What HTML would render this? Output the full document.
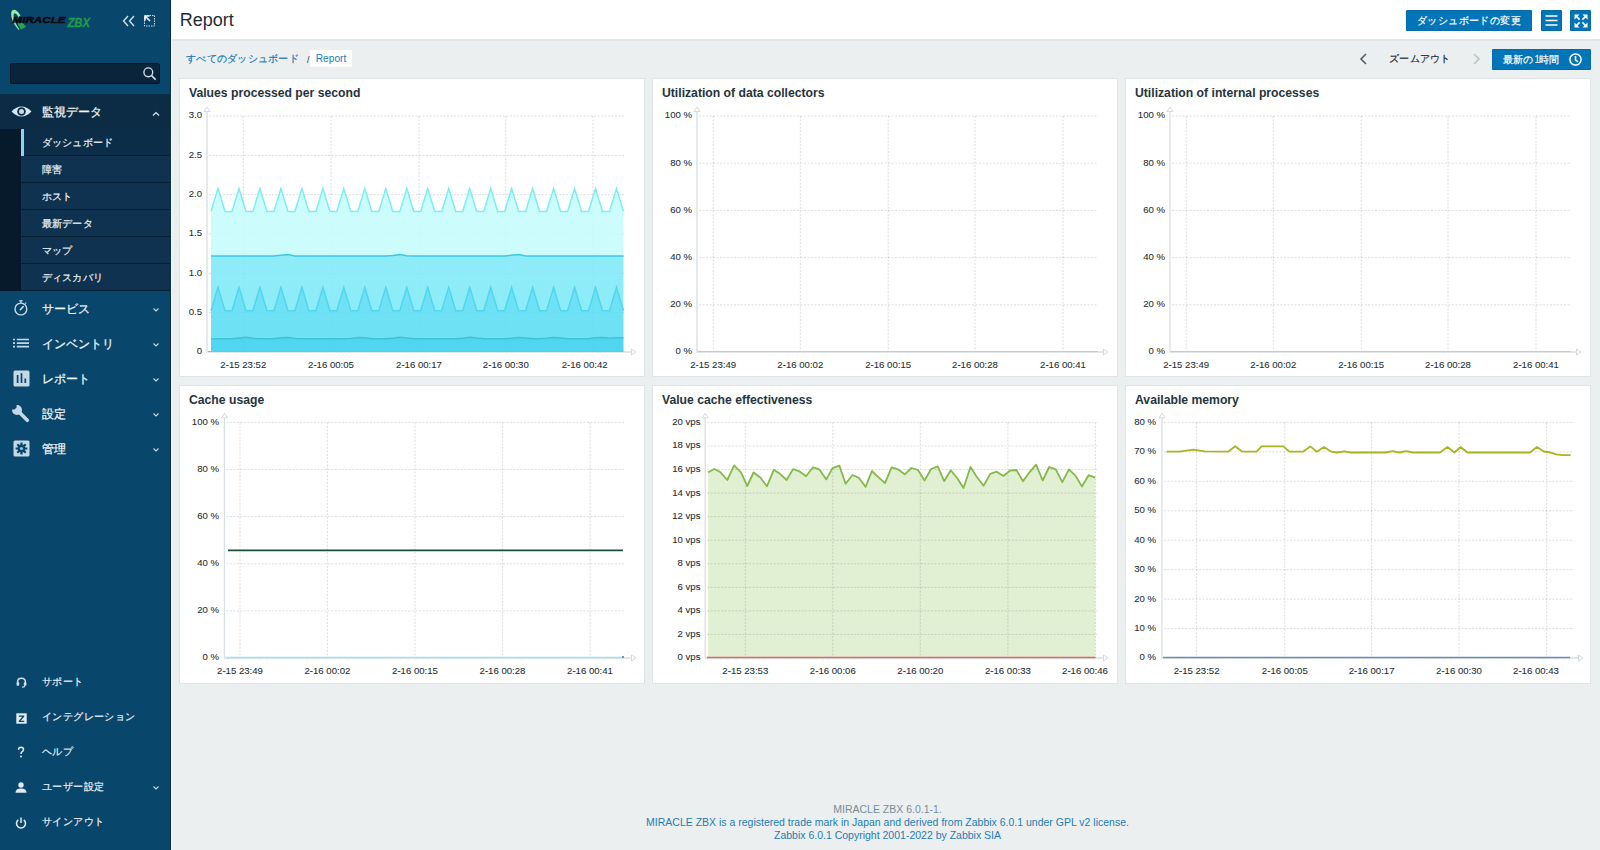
<!DOCTYPE html><html lang="ja"><head><meta charset="utf-8"><title>Report</title><style>
*{box-sizing:border-box}
html,body{margin:0;padding:0}
body{width:1600px;height:850px;overflow:hidden;background:#eceff0;font-family:"Liberation Sans",sans-serif;position:relative;color:#1f2c33}
.a{position:absolute;white-space:nowrap}
#sb{position:absolute;left:0;top:0;width:171px;height:850px;background:#09466c;border-right:1px solid #072f4a}
#wl{position:absolute;left:171px;top:0;width:1px;height:850px;background:#fff}
.mi{position:absolute;left:0;width:170px;height:35px;color:#f2f5f7;font-size:12px;line-height:35px;-webkit-text-stroke:0.25px #f2f5f7}
.mi .t{position:absolute;left:41.5px;top:0.7px}
.mi svg,.bi svg{position:absolute}
.sm{position:absolute;left:21px;width:149px;height:27px;background:#0e3250;color:#eef2f5;font-size:10px;letter-spacing:0.25px;line-height:26px;border-bottom:1px solid #081f31;-webkit-text-stroke:0.2px #eef2f5}
.sm .t{position:absolute;left:20.5px;top:0.8px}
.bi{position:absolute;left:0;width:170px;height:35px;color:#e9eef2;font-size:10px;letter-spacing:0.4px;line-height:35px;-webkit-text-stroke:0.2px #e9eef2}
.bi .t{position:absolute;left:42px;top:0}
.chev{position:absolute;left:152px}
#hdr{position:absolute;left:172px;top:0;width:1428px;height:39px;background:#fff}
.btn{position:absolute;background:#0275b8;border-radius:1.5px;color:#fff;box-shadow:inset 0 0 0 1px #056aa6}
.wg{position:absolute;background:#fff;border:1px solid #dfe4e7;width:466px;height:299px}
.wg .h{position:absolute;left:9px;top:6px;font-size:12.2px;font-weight:bold;color:#24343e;line-height:16px}
#ft{position:absolute;left:173.5px;width:1428px;text-align:center;font-size:10.5px;line-height:13.4px;top:802.5px}
</style></head><body>
<div id="sb">
<svg class="a" style="left:8px;top:7px" width="86" height="26" viewBox="0 0 86 26">
<path d="M3.5 4.5 Q4.5 2 7.5 3 Q10 4 12.5 8.5 L10.5 10 Q8.5 6.5 6.8 6.3 Q5.2 6.3 5.6 9 Q6.5 16 11.5 22.5 L10.8 23 Q4.5 16.5 3.3 9 Q3 6 3.5 4.5Z" fill="#9ee9a6"/>
<path d="M9.5 16.5 L14.5 15.5 L18 20 L13 22.5 Z" fill="#27a552"/>
<text x="4.5" y="16" font-family="Liberation Sans" font-weight="bold" font-style="italic" font-size="8.2" fill="#05090c" stroke="#05090c" stroke-width="0.45" textLength="53" lengthAdjust="spacingAndGlyphs">MIRACLE</text>
<text x="59.5" y="20" font-family="Liberation Sans" font-weight="bold" font-style="italic" font-size="13" fill="#1e9c46" stroke="#1e9c46" stroke-width="0.3" textLength="22.5" lengthAdjust="spacingAndGlyphs">ZBX</text>
</svg>
<svg class="a" style="left:120px;top:12px" width="40" height="18" viewBox="0 0 40 18">
<path d="M8 4 L3.5 9 L8 14 M14 4 L9.5 9 L14 14" fill="none" stroke="#d9e6ee" stroke-width="1.3"/>
<path d="M24.5 3.5 h10 v10.5 h-10 z" fill="none" stroke="#c9dbe6" stroke-width="1" stroke-dasharray="1.5 1"/>
<path d="M25 4 L30 9 M25 4 h4.5 M25 4 v4.5" fill="none" stroke="#eaf2f7" stroke-width="1.7"/>
</svg>
<div class="a" style="left:10px;top:63px;width:150px;height:21px;background:#0a253b;border:1px solid #06182a;border-radius:2px"></div>
<svg class="a" style="left:142px;top:66px" width="16" height="16" viewBox="0 0 16 16"><circle cx="6.3" cy="6.3" r="4.4" fill="none" stroke="#cfdfe9" stroke-width="1.35"/><path d="M9.5 9.5 L13.6 13.6" stroke="#cfdfe9" stroke-width="1.7"/></svg>
<div class="mi" style="top:94px;background:#0c2c45"><svg style="left:10.5px;top:10px" width="21" height="15" viewBox="0 0 21 15"><path d="M0.5 7.5 Q10.5 -2.5 20.5 7.5 Q10.5 17.5 0.5 7.5Z" fill="#dbe7f0"/><circle cx="10.5" cy="7.5" r="4.3" fill="#0c2c45"/><circle cx="10.5" cy="7.5" r="2.5" fill="#c9dceb"/></svg><span class="t">監視データ</span><svg class="chev" style="top:16.5px" width="8" height="6" viewBox="0 0 8 6"><path d="M1 4.5 L4 1.5 L7 4.5" fill="none" stroke="#dfe8ee" stroke-width="1.2"/></svg></div>
<div class="a" style="left:0;top:129px;width:21px;height:162px;background:#061a2b"></div>
<div class="sm" style="top:129px;background:#0c2d48"><span class="t">ダッシュボード</span></div>
<div class="sm" style="top:156px;background:#0e3250"><span class="t">障害</span></div>
<div class="sm" style="top:183px;background:#0e3250"><span class="t">ホスト</span></div>
<div class="sm" style="top:210px;background:#0e3250"><span class="t">最新データ</span></div>
<div class="sm" style="top:237px;background:#0e3250"><span class="t">マップ</span></div>
<div class="sm" style="top:264px;background:#0e3250"><span class="t">ディスカバリ</span></div>
<div class="a" style="left:21px;top:129px;width:3px;height:27px;background:#8fd0f5"></div>
<div class="mi" style="top:291px"><svg style="left:12px;top:8px" width="18" height="18" viewBox="0 0 18 18"><circle cx="8.9" cy="10" r="5.9" fill="none" stroke="#c5d8e5" stroke-width="1.4"/><path d="M7.2 1.8 h3.4" stroke="#c5d8e5" stroke-width="1.4"/><path d="M8.9 2.2 v1.8" stroke="#c5d8e5" stroke-width="1.3"/><path d="M13.2 4.6 l1 -1" stroke="#c5d8e5" stroke-width="1.2"/><path d="M8.4 10.6 L11.3 7.5" stroke="#c5d8e5" stroke-width="1.6" stroke-linecap="round"/></svg><span class="t">サービス</span><svg class="chev" style="top:16.3px" width="8" height="6" viewBox="0 0 8 6"><path d="M1.5 1.5 L4 4 L6.5 1.5" fill="none" stroke="#c9d9e4" stroke-width="1.1"/></svg></div>
<div class="mi" style="top:326px"><svg style="left:12px;top:12px" width="18" height="12" viewBox="0 0 18 12"><path d="M1 1.5h2M1 5.1h2M1 8.7h2M4.8 1.5H17M4.8 5.1H17M4.8 8.7H17" stroke="#c5d8e5" stroke-width="1.7"/></svg><span class="t">インベントリ</span><svg class="chev" style="top:16.3px" width="8" height="6" viewBox="0 0 8 6"><path d="M1.5 1.5 L4 4 L6.5 1.5" fill="none" stroke="#c9d9e4" stroke-width="1.1"/></svg></div>
<div class="mi" style="top:361px"><svg style="left:12.5px;top:8.5px" width="17" height="17" viewBox="0 0 17 17"><rect x="0.5" y="0.5" width="16" height="16" rx="1.5" fill="#c5d8e5"/><path d="M4.6 5v8M8.5 3.3v9.7M12.3 8.5v4.5" stroke="#09466c" stroke-width="1.7"/></svg><span class="t">レポート</span><svg class="chev" style="top:16.3px" width="8" height="6" viewBox="0 0 8 6"><path d="M1.5 1.5 L4 4 L6.5 1.5" fill="none" stroke="#c9d9e4" stroke-width="1.1"/></svg></div>
<div class="mi" style="top:396px"><svg style="left:11px;top:8px" width="19" height="19" viewBox="0 0 19 19"><circle cx="6" cy="6" r="5" fill="#c5d8e5"/><path d="M0.5 0.5 L5.5 0.5 L5.5 3.5 L3.5 5.5 L0.5 5.5Z" fill="#09466c"/><path d="M6.5 6.5 L16.3 16.3" stroke="#c5d8e5" stroke-width="3.6" stroke-linecap="round"/></svg><span class="t">設定</span><svg class="chev" style="top:16.3px" width="8" height="6" viewBox="0 0 8 6"><path d="M1.5 1.5 L4 4 L6.5 1.5" fill="none" stroke="#c9d9e4" stroke-width="1.1"/></svg></div>
<div class="mi" style="top:431px"><svg style="left:12.5px;top:8.5px" width="17" height="17" viewBox="0 0 17 17"><rect x="0.5" y="0.5" width="16" height="16" rx="1.5" fill="#c5d8e5"/><circle cx="8.5" cy="8.5" r="3.9" fill="#09466c"/><path d="M8.5 2.6v2.4M8.5 12v2.4M2.6 8.5h2.4M12 8.5h2.4M4.3 4.3l1.7 1.7M11 11l1.7 1.7M4.3 12.7l1.7-1.7M11 6l1.7-1.7" stroke="#09466c" stroke-width="2.2"/><circle cx="8.5" cy="8.5" r="1.6" fill="#8fc3e6"/></svg><span class="t">管理</span><svg class="chev" style="top:16.3px" width="8" height="6" viewBox="0 0 8 6"><path d="M1.5 1.5 L4 4 L6.5 1.5" fill="none" stroke="#c9d9e4" stroke-width="1.1"/></svg></div>
<div class="bi" style="top:664px"><svg style="left:16px;top:13px" width="11" height="11" viewBox="0 0 11 11"><path d="M1.6 6.5 V5 Q1.6 1.2 5.5 1.2 Q9.4 1.2 9.4 5 V6.5" fill="none" stroke="#d3e1ea" stroke-width="1.5"/><rect x="0.6" y="5.2" width="2.6" height="3.6" rx="0.8" fill="#d3e1ea"/><rect x="7.8" y="5.2" width="2.6" height="3.6" rx="0.8" fill="#d3e1ea"/><path d="M9 8.5 Q8.5 10.3 6 10.3" fill="none" stroke="#d3e1ea" stroke-width="1.1"/></svg><span class="t">サポート</span></div>
<div class="bi" style="top:699px"><svg style="left:16px;top:13.5px" width="11" height="11" viewBox="0 0 11 11"><rect x="0.3" y="0.3" width="10.4" height="10.4" fill="#e3ecf2"/><path d="M2.8 2.5h5.4v1.3l-3.6 4h3.6v1.3h-5.4v-1.3l3.6-4h-3.6z" fill="#09466c"/></svg><span class="t">インテグレーション</span></div>
<div class="bi" style="top:734px"><svg style="left:17px;top:11.5px" width="8" height="13" viewBox="0 0 8 13"><path d="M1.5 3.8 Q1.5 1.2 4 1.2 Q6.5 1.2 6.5 3.6 Q6.5 5 4.9 5.9 Q4 6.5 4 7.9" fill="none" stroke="#e0eaf1" stroke-width="1.5"/><circle cx="4" cy="10.6" r="1" fill="#e0eaf1"/></svg><span class="t">ヘルプ</span></div>
<div class="bi" style="top:769px"><svg style="left:15px;top:13px" width="12" height="11" viewBox="0 0 12 11"><circle cx="6" cy="3" r="2.7" fill="#e0eaf1"/><path d="M0.5 10.8 Q0.5 6.5 6 6.5 Q11.5 6.5 11.5 10.8Z" fill="#e0eaf1"/></svg><span class="t">ユーザー設定</span><svg class="chev" style="top:16.3px" width="8" height="6" viewBox="0 0 8 6"><path d="M1.5 1.5 L4 4 L6.5 1.5" fill="none" stroke="#c9d9e4" stroke-width="1.1"/></svg></div>
<div class="bi" style="top:804px"><svg style="left:15px;top:13px" width="12" height="12" viewBox="0 0 12 12"><path d="M3.3 2.8 A4.5 4.5 0 1 0 8.7 2.8" fill="none" stroke="#e0eaf1" stroke-width="1.5"/><path d="M6 0.5 V6" stroke="#e0eaf1" stroke-width="1.5"/></svg><span class="t">サインアウト</span></div>
</div><div id="wl"></div>
<div id="hdr"></div>
<div class="a" style="left:172px;top:39px;width:1428px;height:2px;background:#e2e5e6"></div>
<div class="a" style="left:179.7px;top:8px;font-size:18px;line-height:24px;color:#1f2c33">Report</div>
<div class="btn" style="left:1406px;top:10px;width:126px;height:21px;font-size:10px;letter-spacing:0.4px;line-height:21px;text-align:center;-webkit-text-stroke:0.2px #fff">ダッシュボードの変更</div>
<div class="btn" style="left:1541px;top:10px;width:21px;height:21px"><svg class="a" style="left:4px;top:4px" width="13" height="13" viewBox="0 0 13 13"><path d="M0.5 2h12M0.5 6.5h12M0.5 11h12" stroke="#fff" stroke-width="1.7"/></svg></div>
<div class="btn" style="left:1570px;top:10px;width:21px;height:21px"><svg class="a" style="left:3.5px;top:3.5px" width="14" height="14" viewBox="0 0 14 14"><path d="M0.5 0.5h5l-5 5z M13.5 0.5h-5l5 5z M0.5 13.5h5l-5-5z M13.5 13.5h-5l5-5z" fill="#fff"/><path d="M2 2L5.6 5.6M12 2L8.4 5.6M2 12L5.6 8.4M12 12L8.4 8.4" stroke="#fff" stroke-width="1.7"/></svg></div>
<div class="a" style="left:186px;top:51px;font-size:10px;letter-spacing:0.27px;line-height:15px;color:#1a7ab5;-webkit-text-stroke:0.2px #1a7ab5">すべてのダッシュボード</div>
<div class="a" style="left:307px;top:54px;font-size:8.5px;line-height:12px;color:#1f2c33">/</div>
<div class="a" style="left:310px;top:50px;width:42px;height:17px;background:#fff;font-size:10.2px;line-height:17px;color:#1a7ab5;text-align:center">Report</div>
<svg class="a" style="left:1357.5px;top:52px" width="12" height="14" viewBox="0 0 12 14"><path d="M8 2 L3 7 L8 12" fill="none" stroke="#535f66" stroke-width="1.6"/></svg>
<div class="a" style="left:1389px;top:52px;font-size:10px;letter-spacing:0.3px;line-height:14px;color:#1f2c33;-webkit-text-stroke:0.2px #1f2c33">ズームアウト</div>
<svg class="a" style="left:1470px;top:52px" width="12" height="14" viewBox="0 0 12 14"><path d="M4 2 L9 7 L4 12" fill="none" stroke="#b9c3c8" stroke-width="1.6"/></svg>
<div class="btn" style="left:1492px;top:49px;width:99px;height:21px"><span class="a" style="left:11px;top:0;font-size:10px;line-height:21px;-webkit-text-stroke:0.2px #fff">最新の</span><span class="a" style="left:42.3px;top:0;font-size:10.4px;line-height:21px;font-family:'Liberation Sans'">1</span><span class="a" style="left:47px;top:0;font-size:10px;line-height:21px;-webkit-text-stroke:0.2px #fff">時間</span><svg class="a" style="left:76px;top:3px" width="15" height="15" viewBox="0 0 15 15"><circle cx="7.5" cy="7.5" r="5.6" fill="none" stroke="#fff" stroke-width="1.5"/><path d="M7.5 4 V7.8 L10 9.8" fill="none" stroke="#fff" stroke-width="1.5"/></svg></div>
<div class="wg" style="left:179px;top:78px"><div class="h">Values processed per second</div></div>
<div class="wg" style="left:652px;top:78px"><div class="h">Utilization of data collectors</div></div>
<div class="wg" style="left:1125px;top:78px"><div class="h">Utilization of internal processes</div></div>
<div class="wg" style="left:179px;top:385px"><div class="h">Cache usage</div></div>
<div class="wg" style="left:652px;top:385px"><div class="h">Value cache effectiveness</div></div>
<div class="wg" style="left:1125px;top:385px"><div class="h">Available memory</div></div>
<svg class="a" style="left:0;top:0" width="1600" height="850" viewBox="0 0 1600 850" font-family="Liberation Sans" font-size="9.6" fill="#1f2c33">
<path d="M209 116.0H624" stroke="#1f2c33" stroke-opacity="0.16" stroke-width="1" stroke-dasharray="2 1.5"/>
<path d="M209 155.33333333333334H624" stroke="#1f2c33" stroke-opacity="0.16" stroke-width="1" stroke-dasharray="2 1.5"/>
<path d="M209 194.66666666666669H624" stroke="#1f2c33" stroke-opacity="0.16" stroke-width="1" stroke-dasharray="2 1.5"/>
<path d="M209 234.0H624" stroke="#1f2c33" stroke-opacity="0.16" stroke-width="1" stroke-dasharray="2 1.5"/>
<path d="M209 273.33333333333337H624" stroke="#1f2c33" stroke-opacity="0.16" stroke-width="1" stroke-dasharray="2 1.5"/>
<path d="M209 312.66666666666663H624" stroke="#1f2c33" stroke-opacity="0.16" stroke-width="1" stroke-dasharray="2 1.5"/>
<path d="M243.3 116V352" stroke="#1f2c33" stroke-opacity="0.16" stroke-width="1" stroke-dasharray="2 1.5"/>
<path d="M331 116V352" stroke="#1f2c33" stroke-opacity="0.16" stroke-width="1" stroke-dasharray="2 1.5"/>
<path d="M419 116V352" stroke="#1f2c33" stroke-opacity="0.16" stroke-width="1" stroke-dasharray="2 1.5"/>
<path d="M505.8 116V352" stroke="#1f2c33" stroke-opacity="0.16" stroke-width="1" stroke-dasharray="2 1.5"/>
<path d="M593 116V352" stroke="#1f2c33" stroke-opacity="0.16" stroke-width="1" stroke-dasharray="2 1.5"/>
<polygon points="211.0,211.4 218.0,188.5 225.0,211.4 232.0,211.4 239.0,188.5 246.0,211.4 252.9,211.4 259.9,188.5 266.9,211.4 273.9,211.4 280.9,188.5 287.9,211.4 294.9,211.4 301.9,188.5 308.9,211.4 315.9,211.4 322.9,188.5 329.9,211.4 336.8,211.4 343.8,188.5 350.8,211.4 357.8,211.4 364.8,188.5 371.8,211.4 378.8,211.4 385.8,188.5 392.8,211.4 399.8,211.4 406.8,188.5 413.8,211.4 420.7,211.4 427.7,188.5 434.7,211.4 441.7,211.4 448.7,188.5 455.7,211.4 462.7,211.4 469.7,188.5 476.7,211.4 483.7,211.4 490.7,188.5 497.7,211.4 504.6,211.4 511.6,188.5 518.6,211.4 525.6,211.4 532.6,188.5 539.6,211.4 546.6,211.4 553.6,188.5 560.6,211.4 567.6,211.4 574.6,188.5 581.6,211.4 588.5,211.4 595.5,188.5 602.5,211.4 609.5,211.4 616.5,188.5 623.5,211.4 623.5,256.0 616.5,256.0 609.5,256.0 602.5,256.0 595.5,256.0 588.5,256.0 581.6,256.0 574.6,256.0 567.6,256.0 560.6,256.0 553.6,256.0 546.6,256.0 539.6,256.0 532.6,256.0 525.6,255.9 518.6,254.5 511.6,255.3 504.6,256.0 497.7,256.0 490.7,256.0 483.7,256.0 476.7,256.0 469.7,256.0 462.7,256.0 455.7,256.0 448.7,256.0 441.7,256.0 434.7,256.0 427.7,256.0 420.7,256.0 413.8,256.0 406.8,255.8 399.8,254.4 392.8,255.4 385.8,256.0 378.8,256.0 371.8,256.0 364.8,256.0 357.8,256.0 350.8,256.0 343.8,256.0 336.8,256.0 329.9,256.0 322.9,256.0 315.9,256.0 308.9,256.0 301.9,256.0 294.9,256.0 287.9,254.6 280.9,255.2 273.9,256.0 266.9,256.0 259.9,256.0 252.9,256.0 246.0,256.0 239.0,256.0 232.0,256.0 225.0,256.0 218.0,256.0 211.0,256.0" fill="#c4fbfd" fill-opacity="0.85"/>
<polygon points="211.0,256.0 218.0,256.0 225.0,256.0 232.0,256.0 239.0,256.0 246.0,256.0 252.9,256.0 259.9,256.0 266.9,256.0 273.9,256.0 280.9,255.2 287.9,254.6 294.9,256.0 301.9,256.0 308.9,256.0 315.9,256.0 322.9,256.0 329.9,256.0 336.8,256.0 343.8,256.0 350.8,256.0 357.8,256.0 364.8,256.0 371.8,256.0 378.8,256.0 385.8,256.0 392.8,255.4 399.8,254.4 406.8,255.8 413.8,256.0 420.7,256.0 427.7,256.0 434.7,256.0 441.7,256.0 448.7,256.0 455.7,256.0 462.7,256.0 469.7,256.0 476.7,256.0 483.7,256.0 490.7,256.0 497.7,256.0 504.6,256.0 511.6,255.3 518.6,254.5 525.6,255.9 532.6,256.0 539.6,256.0 546.6,256.0 553.6,256.0 560.6,256.0 567.6,256.0 574.6,256.0 581.6,256.0 588.5,256.0 595.5,256.0 602.5,256.0 609.5,256.0 616.5,256.0 623.5,256.0 623.5,310.7 616.5,287.4 609.5,310.7 602.5,310.7 595.5,287.4 588.5,310.7 581.6,310.7 574.6,287.4 567.6,310.7 560.6,310.7 553.6,287.4 546.6,310.7 539.6,310.7 532.6,287.4 525.6,310.7 518.6,310.7 511.6,287.4 504.6,310.7 497.7,310.7 490.7,287.4 483.7,310.7 476.7,310.7 469.7,287.4 462.7,310.7 455.7,310.7 448.7,287.4 441.7,310.7 434.7,310.7 427.7,287.4 420.7,310.7 413.8,310.7 406.8,287.4 399.8,310.7 392.8,310.7 385.8,287.4 378.8,310.7 371.8,310.7 364.8,287.4 357.8,310.7 350.8,310.7 343.8,287.4 336.8,310.7 329.9,310.7 322.9,287.4 315.9,310.7 308.9,310.7 301.9,287.4 294.9,310.7 287.9,310.7 280.9,287.4 273.9,310.7 266.9,310.7 259.9,287.4 252.9,310.7 246.0,310.7 239.0,287.4 232.0,310.7 225.0,310.7 218.0,287.4 211.0,310.7" fill="#7ae7f7" fill-opacity="0.85"/>
<polygon points="211.0,310.7 218.0,287.4 225.0,310.7 232.0,310.7 239.0,287.4 246.0,310.7 252.9,310.7 259.9,287.4 266.9,310.7 273.9,310.7 280.9,287.4 287.9,310.7 294.9,310.7 301.9,287.4 308.9,310.7 315.9,310.7 322.9,287.4 329.9,310.7 336.8,310.7 343.8,287.4 350.8,310.7 357.8,310.7 364.8,287.4 371.8,310.7 378.8,310.7 385.8,287.4 392.8,310.7 399.8,310.7 406.8,287.4 413.8,310.7 420.7,310.7 427.7,287.4 434.7,310.7 441.7,310.7 448.7,287.4 455.7,310.7 462.7,310.7 469.7,287.4 476.7,310.7 483.7,310.7 490.7,287.4 497.7,310.7 504.6,310.7 511.6,287.4 518.6,310.7 525.6,310.7 532.6,287.4 539.6,310.7 546.6,310.7 553.6,287.4 560.6,310.7 567.6,310.7 574.6,287.4 581.6,310.7 588.5,310.7 595.5,287.4 602.5,310.7 609.5,310.7 616.5,287.4 623.5,310.7 623.5,337.7 616.5,337.7 609.5,338.3 602.5,337.5 595.5,337.8 588.5,338.7 581.6,338.8 574.6,338.8 567.6,338.8 560.6,337.9 553.6,337.4 546.6,338.3 539.6,338.8 532.6,338.8 525.6,337.9 518.6,337.4 511.6,338.3 504.6,338.8 497.7,338.8 490.7,338.8 483.7,338.8 476.7,338.1 469.7,337.2 462.7,338.2 455.7,338.8 448.7,338.8 441.7,338.8 434.7,338.8 427.7,338.8 420.7,338.8 413.8,338.8 406.8,338.1 399.8,337.2 392.8,338.2 385.8,338.8 378.8,338.8 371.8,338.8 364.8,337.8 357.8,337.5 350.8,338.4 343.8,338.8 336.8,338.8 329.9,338.8 322.9,338.8 315.9,338.8 308.9,338.8 301.9,338.8 294.9,338.5 287.9,337.6 280.9,337.7 273.9,338.7 266.9,338.8 259.9,338.8 252.9,338.3 246.0,337.3 239.0,338.0 232.0,338.8 225.0,338.8 218.0,338.8 211.0,338.8" fill="#56dcf3" fill-opacity="0.85"/>
<polygon points="211.0,338.8 218.0,338.8 225.0,338.8 232.0,338.8 239.0,338.0 246.0,337.3 252.9,338.3 259.9,338.8 266.9,338.8 273.9,338.7 280.9,337.7 287.9,337.6 294.9,338.5 301.9,338.8 308.9,338.8 315.9,338.8 322.9,338.8 329.9,338.8 336.8,338.8 343.8,338.8 350.8,338.4 357.8,337.5 364.8,337.8 371.8,338.8 378.8,338.8 385.8,338.8 392.8,338.2 399.8,337.2 406.8,338.1 413.8,338.8 420.7,338.8 427.7,338.8 434.7,338.8 441.7,338.8 448.7,338.8 455.7,338.8 462.7,338.2 469.7,337.2 476.7,338.1 483.7,338.8 490.7,338.8 497.7,338.8 504.6,338.8 511.6,338.3 518.6,337.4 525.6,337.9 532.6,338.8 539.6,338.8 546.6,338.3 553.6,337.4 560.6,337.9 567.6,338.8 574.6,338.8 581.6,338.8 588.5,338.7 595.5,337.8 602.5,337.5 609.5,338.3 616.5,337.7 623.5,337.7 623.5,352.0 211.0,352.0" fill="#31cfef" fill-opacity="0.85"/>
<path d="M207 111V352H632" fill="none" stroke="#d9dee2" stroke-width="1.3"/>
<path d="M207 107 l-3 4.5 h6 z" fill="#fff" stroke="#d3d9dd" stroke-width="1"/>
<path d="M636 352 l-4.5 -3 v6 z" fill="#fff" stroke="#d3d9dd" stroke-width="1"/>
<polyline points="211.0,211.4 218.0,188.5 225.0,211.4 232.0,211.4 239.0,188.5 246.0,211.4 252.9,211.4 259.9,188.5 266.9,211.4 273.9,211.4 280.9,188.5 287.9,211.4 294.9,211.4 301.9,188.5 308.9,211.4 315.9,211.4 322.9,188.5 329.9,211.4 336.8,211.4 343.8,188.5 350.8,211.4 357.8,211.4 364.8,188.5 371.8,211.4 378.8,211.4 385.8,188.5 392.8,211.4 399.8,211.4 406.8,188.5 413.8,211.4 420.7,211.4 427.7,188.5 434.7,211.4 441.7,211.4 448.7,188.5 455.7,211.4 462.7,211.4 469.7,188.5 476.7,211.4 483.7,211.4 490.7,188.5 497.7,211.4 504.6,211.4 511.6,188.5 518.6,211.4 525.6,211.4 532.6,188.5 539.6,211.4 546.6,211.4 553.6,188.5 560.6,211.4 567.6,211.4 574.6,188.5 581.6,211.4 588.5,211.4 595.5,188.5 602.5,211.4 609.5,211.4 616.5,188.5 623.5,211.4" fill="none" stroke="#7beef4" stroke-width="1.5"/>
<polyline points="211.0,256.0 218.0,256.0 225.0,256.0 232.0,256.0 239.0,256.0 246.0,256.0 252.9,256.0 259.9,256.0 266.9,256.0 273.9,256.0 280.9,255.2 287.9,254.6 294.9,256.0 301.9,256.0 308.9,256.0 315.9,256.0 322.9,256.0 329.9,256.0 336.8,256.0 343.8,256.0 350.8,256.0 357.8,256.0 364.8,256.0 371.8,256.0 378.8,256.0 385.8,256.0 392.8,255.4 399.8,254.4 406.8,255.8 413.8,256.0 420.7,256.0 427.7,256.0 434.7,256.0 441.7,256.0 448.7,256.0 455.7,256.0 462.7,256.0 469.7,256.0 476.7,256.0 483.7,256.0 490.7,256.0 497.7,256.0 504.6,256.0 511.6,255.3 518.6,254.5 525.6,255.9 532.6,256.0 539.6,256.0 546.6,256.0 553.6,256.0 560.6,256.0 567.6,256.0 574.6,256.0 581.6,256.0 588.5,256.0 595.5,256.0 602.5,256.0 609.5,256.0 616.5,256.0 623.5,256.0" fill="none" stroke="#3ec7e3" stroke-width="1.5"/>
<polyline points="211.0,310.7 218.0,287.4 225.0,310.7 232.0,310.7 239.0,287.4 246.0,310.7 252.9,310.7 259.9,287.4 266.9,310.7 273.9,310.7 280.9,287.4 287.9,310.7 294.9,310.7 301.9,287.4 308.9,310.7 315.9,310.7 322.9,287.4 329.9,310.7 336.8,310.7 343.8,287.4 350.8,310.7 357.8,310.7 364.8,287.4 371.8,310.7 378.8,310.7 385.8,287.4 392.8,310.7 399.8,310.7 406.8,287.4 413.8,310.7 420.7,310.7 427.7,287.4 434.7,310.7 441.7,310.7 448.7,287.4 455.7,310.7 462.7,310.7 469.7,287.4 476.7,310.7 483.7,310.7 490.7,287.4 497.7,310.7 504.6,310.7 511.6,287.4 518.6,310.7 525.6,310.7 532.6,287.4 539.6,310.7 546.6,310.7 553.6,287.4 560.6,310.7 567.6,310.7 574.6,287.4 581.6,310.7 588.5,310.7 595.5,287.4 602.5,310.7 609.5,310.7 616.5,287.4 623.5,310.7" fill="none" stroke="#4fd7ef" stroke-width="1.5"/>
<polyline points="211.0,338.8 218.0,338.8 225.0,338.8 232.0,338.8 239.0,338.0 246.0,337.3 252.9,338.3 259.9,338.8 266.9,338.8 273.9,338.7 280.9,337.7 287.9,337.6 294.9,338.5 301.9,338.8 308.9,338.8 315.9,338.8 322.9,338.8 329.9,338.8 336.8,338.8 343.8,338.8 350.8,338.4 357.8,337.5 364.8,337.8 371.8,338.8 378.8,338.8 385.8,338.8 392.8,338.2 399.8,337.2 406.8,338.1 413.8,338.8 420.7,338.8 427.7,338.8 434.7,338.8 441.7,338.8 448.7,338.8 455.7,338.8 462.7,338.2 469.7,337.2 476.7,338.1 483.7,338.8 490.7,338.8 497.7,338.8 504.6,338.8 511.6,338.3 518.6,337.4 525.6,337.9 532.6,338.8 539.6,338.8 546.6,338.3 553.6,337.4 560.6,337.9 567.6,338.8 574.6,338.8 581.6,338.8 588.5,338.7 595.5,337.8 602.5,337.5 609.5,338.3 616.5,337.7 623.5,337.7" fill="none" stroke="#3cc1de" stroke-width="1.5"/>
<path d="M208 351.5H623.5" stroke="#42d6f0" stroke-width="1.2"/>
<text x="202" y="118.4" text-anchor="end" fill="#1f2c33" stroke="#1f2c33" stroke-width="0.08">3.0</text>
<text x="202" y="157.7" text-anchor="end" fill="#1f2c33" stroke="#1f2c33" stroke-width="0.08">2.5</text>
<text x="202" y="197.1" text-anchor="end" fill="#1f2c33" stroke="#1f2c33" stroke-width="0.08">2.0</text>
<text x="202" y="236.4" text-anchor="end" fill="#1f2c33" stroke="#1f2c33" stroke-width="0.08">1.5</text>
<text x="202" y="275.7" text-anchor="end" fill="#1f2c33" stroke="#1f2c33" stroke-width="0.08">1.0</text>
<text x="202" y="315.1" text-anchor="end" fill="#1f2c33" stroke="#1f2c33" stroke-width="0.08">0.5</text>
<text x="202" y="354.4" text-anchor="end" fill="#1f2c33" stroke="#1f2c33" stroke-width="0.08">0</text>
<text x="243.3" y="367.5" text-anchor="middle" fill="#1f2c33" stroke="#1f2c33" stroke-width="0.08">2-15 23:52</text>
<text x="331" y="367.5" text-anchor="middle" fill="#1f2c33" stroke="#1f2c33" stroke-width="0.08">2-16 00:05</text>
<text x="419" y="367.5" text-anchor="middle" fill="#1f2c33" stroke="#1f2c33" stroke-width="0.08">2-16 00:17</text>
<text x="505.8" y="367.5" text-anchor="middle" fill="#1f2c33" stroke="#1f2c33" stroke-width="0.08">2-16 00:30</text>
<text x="584.7" y="367.5" text-anchor="middle" fill="#1f2c33" stroke="#1f2c33" stroke-width="0.08">2-16 00:42</text>
<path d="M699 116.0H1097.7" stroke="#1f2c33" stroke-opacity="0.16" stroke-width="1" stroke-dasharray="2 1.5"/>
<path d="M699 163.2H1097.7" stroke="#1f2c33" stroke-opacity="0.16" stroke-width="1" stroke-dasharray="2 1.5"/>
<path d="M699 210.4H1097.7" stroke="#1f2c33" stroke-opacity="0.16" stroke-width="1" stroke-dasharray="2 1.5"/>
<path d="M699 257.6H1097.7" stroke="#1f2c33" stroke-opacity="0.16" stroke-width="1" stroke-dasharray="2 1.5"/>
<path d="M699 304.8H1097.7" stroke="#1f2c33" stroke-opacity="0.16" stroke-width="1" stroke-dasharray="2 1.5"/>
<path d="M713.2 116V352" stroke="#1f2c33" stroke-opacity="0.16" stroke-width="1" stroke-dasharray="2 1.5"/>
<path d="M800.3 116V352" stroke="#1f2c33" stroke-opacity="0.16" stroke-width="1" stroke-dasharray="2 1.5"/>
<path d="M888.2 116V352" stroke="#1f2c33" stroke-opacity="0.16" stroke-width="1" stroke-dasharray="2 1.5"/>
<path d="M975 116V352" stroke="#1f2c33" stroke-opacity="0.16" stroke-width="1" stroke-dasharray="2 1.5"/>
<path d="M1063 116V352" stroke="#1f2c33" stroke-opacity="0.16" stroke-width="1" stroke-dasharray="2 1.5"/>
<path d="M697 111V352H1104" fill="none" stroke="#d9dee2" stroke-width="1.3"/>
<path d="M697 107 l-3 4.5 h6 z" fill="#fff" stroke="#d3d9dd" stroke-width="1"/>
<path d="M1108 352 l-4.5 -3 v6 z" fill="#fff" stroke="#d3d9dd" stroke-width="1"/>
<path d="M698 351.5H1097.7" stroke="#f2b8b8" stroke-width="1.2"/>
<text x="692" y="118.4" text-anchor="end" fill="#1f2c33" stroke="#1f2c33" stroke-width="0.08">100 %</text>
<text x="692" y="165.6" text-anchor="end" fill="#1f2c33" stroke="#1f2c33" stroke-width="0.08">80 %</text>
<text x="692" y="212.8" text-anchor="end" fill="#1f2c33" stroke="#1f2c33" stroke-width="0.08">60 %</text>
<text x="692" y="260.0" text-anchor="end" fill="#1f2c33" stroke="#1f2c33" stroke-width="0.08">40 %</text>
<text x="692" y="307.2" text-anchor="end" fill="#1f2c33" stroke="#1f2c33" stroke-width="0.08">20 %</text>
<text x="692" y="354.4" text-anchor="end" fill="#1f2c33" stroke="#1f2c33" stroke-width="0.08">0 %</text>
<text x="713.2" y="367.5" text-anchor="middle" fill="#1f2c33" stroke="#1f2c33" stroke-width="0.08">2-15 23:49</text>
<text x="800.3" y="367.5" text-anchor="middle" fill="#1f2c33" stroke="#1f2c33" stroke-width="0.08">2-16 00:02</text>
<text x="888.2" y="367.5" text-anchor="middle" fill="#1f2c33" stroke="#1f2c33" stroke-width="0.08">2-16 00:15</text>
<text x="975" y="367.5" text-anchor="middle" fill="#1f2c33" stroke="#1f2c33" stroke-width="0.08">2-16 00:28</text>
<text x="1063" y="367.5" text-anchor="middle" fill="#1f2c33" stroke="#1f2c33" stroke-width="0.08">2-16 00:41</text>
<path d="M1172 116.0H1570.7" stroke="#1f2c33" stroke-opacity="0.16" stroke-width="1" stroke-dasharray="2 1.5"/>
<path d="M1172 163.2H1570.7" stroke="#1f2c33" stroke-opacity="0.16" stroke-width="1" stroke-dasharray="2 1.5"/>
<path d="M1172 210.4H1570.7" stroke="#1f2c33" stroke-opacity="0.16" stroke-width="1" stroke-dasharray="2 1.5"/>
<path d="M1172 257.6H1570.7" stroke="#1f2c33" stroke-opacity="0.16" stroke-width="1" stroke-dasharray="2 1.5"/>
<path d="M1172 304.8H1570.7" stroke="#1f2c33" stroke-opacity="0.16" stroke-width="1" stroke-dasharray="2 1.5"/>
<path d="M1186.2 116V352" stroke="#1f2c33" stroke-opacity="0.16" stroke-width="1" stroke-dasharray="2 1.5"/>
<path d="M1273.3 116V352" stroke="#1f2c33" stroke-opacity="0.16" stroke-width="1" stroke-dasharray="2 1.5"/>
<path d="M1361.2 116V352" stroke="#1f2c33" stroke-opacity="0.16" stroke-width="1" stroke-dasharray="2 1.5"/>
<path d="M1448 116V352" stroke="#1f2c33" stroke-opacity="0.16" stroke-width="1" stroke-dasharray="2 1.5"/>
<path d="M1536 116V352" stroke="#1f2c33" stroke-opacity="0.16" stroke-width="1" stroke-dasharray="2 1.5"/>
<path d="M1170 111V352H1577" fill="none" stroke="#d9dee2" stroke-width="1.3"/>
<path d="M1170 107 l-3 4.5 h6 z" fill="#fff" stroke="#d3d9dd" stroke-width="1"/>
<path d="M1581 352 l-4.5 -3 v6 z" fill="#fff" stroke="#d3d9dd" stroke-width="1"/>
<path d="M1171 351.5H1570.7" stroke="#f2b8b8" stroke-width="1.2"/>
<text x="1165" y="118.4" text-anchor="end" fill="#1f2c33" stroke="#1f2c33" stroke-width="0.08">100 %</text>
<text x="1165" y="165.6" text-anchor="end" fill="#1f2c33" stroke="#1f2c33" stroke-width="0.08">80 %</text>
<text x="1165" y="212.8" text-anchor="end" fill="#1f2c33" stroke="#1f2c33" stroke-width="0.08">60 %</text>
<text x="1165" y="260.0" text-anchor="end" fill="#1f2c33" stroke="#1f2c33" stroke-width="0.08">40 %</text>
<text x="1165" y="307.2" text-anchor="end" fill="#1f2c33" stroke="#1f2c33" stroke-width="0.08">20 %</text>
<text x="1165" y="354.4" text-anchor="end" fill="#1f2c33" stroke="#1f2c33" stroke-width="0.08">0 %</text>
<text x="1186.2" y="367.5" text-anchor="middle" fill="#1f2c33" stroke="#1f2c33" stroke-width="0.08">2-15 23:49</text>
<text x="1273.3" y="367.5" text-anchor="middle" fill="#1f2c33" stroke="#1f2c33" stroke-width="0.08">2-16 00:02</text>
<text x="1361.2" y="367.5" text-anchor="middle" fill="#1f2c33" stroke="#1f2c33" stroke-width="0.08">2-16 00:15</text>
<text x="1448" y="367.5" text-anchor="middle" fill="#1f2c33" stroke="#1f2c33" stroke-width="0.08">2-16 00:28</text>
<text x="1536" y="367.5" text-anchor="middle" fill="#1f2c33" stroke="#1f2c33" stroke-width="0.08">2-16 00:41</text>
<path d="M226.4 422.4H625.4" stroke="#1f2c33" stroke-opacity="0.16" stroke-width="1" stroke-dasharray="2 1.5"/>
<path d="M226.4 469.52H625.4" stroke="#1f2c33" stroke-opacity="0.16" stroke-width="1" stroke-dasharray="2 1.5"/>
<path d="M226.4 516.64H625.4" stroke="#1f2c33" stroke-opacity="0.16" stroke-width="1" stroke-dasharray="2 1.5"/>
<path d="M226.4 563.76H625.4" stroke="#1f2c33" stroke-opacity="0.16" stroke-width="1" stroke-dasharray="2 1.5"/>
<path d="M226.4 610.88H625.4" stroke="#1f2c33" stroke-opacity="0.16" stroke-width="1" stroke-dasharray="2 1.5"/>
<path d="M240 422.4V658" stroke="#1f2c33" stroke-opacity="0.16" stroke-width="1" stroke-dasharray="2 1.5"/>
<path d="M327.4 422.4V658" stroke="#1f2c33" stroke-opacity="0.16" stroke-width="1" stroke-dasharray="2 1.5"/>
<path d="M415 422.4V658" stroke="#1f2c33" stroke-opacity="0.16" stroke-width="1" stroke-dasharray="2 1.5"/>
<path d="M502.5 422.4V658" stroke="#1f2c33" stroke-opacity="0.16" stroke-width="1" stroke-dasharray="2 1.5"/>
<path d="M590 422.4V658" stroke="#1f2c33" stroke-opacity="0.16" stroke-width="1" stroke-dasharray="2 1.5"/>
<path d="M224.4 417.4V658H632" fill="none" stroke="#d9dee2" stroke-width="1.3"/>
<path d="M224.4 413.4 l-3 4.5 h6 z" fill="#fff" stroke="#d3d9dd" stroke-width="1"/>
<path d="M636 658 l-4.5 -3 v6 z" fill="#fff" stroke="#d3d9dd" stroke-width="1"/>
<path d="M226 657.5H623" stroke="#9fe3f0" stroke-width="1.5"/>
<path d="M228 550.3H623" stroke="#1d4e3c" stroke-width="1.8"/>
<circle cx="623" cy="657" r="1" fill="#3a7fa0"/>
<text x="219" y="424.8" text-anchor="end" fill="#1f2c33" stroke="#1f2c33" stroke-width="0.08">100 %</text>
<text x="219" y="471.9" text-anchor="end" fill="#1f2c33" stroke="#1f2c33" stroke-width="0.08">80 %</text>
<text x="219" y="519.0" text-anchor="end" fill="#1f2c33" stroke="#1f2c33" stroke-width="0.08">60 %</text>
<text x="219" y="566.2" text-anchor="end" fill="#1f2c33" stroke="#1f2c33" stroke-width="0.08">40 %</text>
<text x="219" y="613.3" text-anchor="end" fill="#1f2c33" stroke="#1f2c33" stroke-width="0.08">20 %</text>
<text x="219" y="660.4" text-anchor="end" fill="#1f2c33" stroke="#1f2c33" stroke-width="0.08">0 %</text>
<text x="240" y="674" text-anchor="middle" fill="#1f2c33" stroke="#1f2c33" stroke-width="0.08">2-15 23:49</text>
<text x="327.4" y="674" text-anchor="middle" fill="#1f2c33" stroke="#1f2c33" stroke-width="0.08">2-16 00:02</text>
<text x="415" y="674" text-anchor="middle" fill="#1f2c33" stroke="#1f2c33" stroke-width="0.08">2-16 00:15</text>
<text x="502.5" y="674" text-anchor="middle" fill="#1f2c33" stroke="#1f2c33" stroke-width="0.08">2-16 00:28</text>
<text x="590" y="674" text-anchor="middle" fill="#1f2c33" stroke="#1f2c33" stroke-width="0.08">2-16 00:41</text>
<polygon points="708.1,472.3 714.4,469.0 720.6,472.3 727.3,480.0 734.1,465.4 741.0,472.3 747.3,486.0 753.5,472.5 760.6,477.8 766.9,486.3 773.8,469.8 780.0,473.8 786.6,480.0 793.1,469.1 799.4,471.3 806.0,476.3 813.1,467.3 819.4,469.4 826.3,479.4 832.5,468.1 839.4,465.6 845.6,483.8 852.5,475.0 858.8,477.8 865.6,486.9 871.9,471.0 878.1,476.9 885.0,483.1 891.6,467.3 898.1,469.4 904.8,474.3 911.4,468.0 918.0,470.0 924.5,480.5 931.1,469.0 937.7,466.4 944.2,481.2 950.8,470.3 957.3,478.2 963.5,488.0 970.5,467.0 977.0,477.3 983.6,485.7 990.2,473.9 996.7,471.7 1003.3,476.0 1009.8,470.7 1016.4,470.0 1023.0,481.2 1029.5,472.3 1036.1,464.7 1042.7,480.5 1049.2,467.0 1055.8,469.4 1062.3,482.2 1068.9,469.4 1075.5,475.6 1082.0,486.5 1088.6,475.2 1095.2,477.6 1095.2,658.0 708.1,658.0" fill="#e1f0d3" fill-opacity="1"/>
<path d="M707.2 422.4H1097" stroke="#1f2c33" stroke-opacity="0.16" stroke-width="1" stroke-dasharray="2 1.5"/>
<path d="M707.2 445.96H1097" stroke="#1f2c33" stroke-opacity="0.16" stroke-width="1" stroke-dasharray="2 1.5"/>
<path d="M707.2 469.52H1097" stroke="#1f2c33" stroke-opacity="0.16" stroke-width="1" stroke-dasharray="2 1.5"/>
<path d="M707.2 493.08H1097" stroke="#1f2c33" stroke-opacity="0.16" stroke-width="1" stroke-dasharray="2 1.5"/>
<path d="M707.2 516.64H1097" stroke="#1f2c33" stroke-opacity="0.16" stroke-width="1" stroke-dasharray="2 1.5"/>
<path d="M707.2 540.1999999999999H1097" stroke="#1f2c33" stroke-opacity="0.16" stroke-width="1" stroke-dasharray="2 1.5"/>
<path d="M707.2 563.76H1097" stroke="#1f2c33" stroke-opacity="0.16" stroke-width="1" stroke-dasharray="2 1.5"/>
<path d="M707.2 587.3199999999999H1097" stroke="#1f2c33" stroke-opacity="0.16" stroke-width="1" stroke-dasharray="2 1.5"/>
<path d="M707.2 610.88H1097" stroke="#1f2c33" stroke-opacity="0.16" stroke-width="1" stroke-dasharray="2 1.5"/>
<path d="M707.2 634.44H1097" stroke="#1f2c33" stroke-opacity="0.16" stroke-width="1" stroke-dasharray="2 1.5"/>
<path d="M745.3 422.4V658" stroke="#1f2c33" stroke-opacity="0.16" stroke-width="1" stroke-dasharray="2 1.5"/>
<path d="M832.8 422.4V658" stroke="#1f2c33" stroke-opacity="0.16" stroke-width="1" stroke-dasharray="2 1.5"/>
<path d="M920.3 422.4V658" stroke="#1f2c33" stroke-opacity="0.16" stroke-width="1" stroke-dasharray="2 1.5"/>
<path d="M1007.9 422.4V658" stroke="#1f2c33" stroke-opacity="0.16" stroke-width="1" stroke-dasharray="2 1.5"/>
<path d="M1095.4 422.4V658" stroke="#1f2c33" stroke-opacity="0.16" stroke-width="1" stroke-dasharray="2 1.5"/>
<path d="M705.2 417.4V658H1104" fill="none" stroke="#d9dee2" stroke-width="1.3"/>
<path d="M705.2 413.4 l-3 4.5 h6 z" fill="#fff" stroke="#d3d9dd" stroke-width="1"/>
<path d="M1108 658 l-4.5 -3 v6 z" fill="#fff" stroke="#d3d9dd" stroke-width="1"/>
<polyline points="708.1,472.3 714.4,469.0 720.6,472.3 727.3,480.0 734.1,465.4 741.0,472.3 747.3,486.0 753.5,472.5 760.6,477.8 766.9,486.3 773.8,469.8 780.0,473.8 786.6,480.0 793.1,469.1 799.4,471.3 806.0,476.3 813.1,467.3 819.4,469.4 826.3,479.4 832.5,468.1 839.4,465.6 845.6,483.8 852.5,475.0 858.8,477.8 865.6,486.9 871.9,471.0 878.1,476.9 885.0,483.1 891.6,467.3 898.1,469.4 904.8,474.3 911.4,468.0 918.0,470.0 924.5,480.5 931.1,469.0 937.7,466.4 944.2,481.2 950.8,470.3 957.3,478.2 963.5,488.0 970.5,467.0 977.0,477.3 983.6,485.7 990.2,473.9 996.7,471.7 1003.3,476.0 1009.8,470.7 1016.4,470.0 1023.0,481.2 1029.5,472.3 1036.1,464.7 1042.7,480.5 1049.2,467.0 1055.8,469.4 1062.3,482.2 1068.9,469.4 1075.5,475.6 1082.0,486.5 1088.6,475.2 1095.2,477.6" fill="none" stroke="#86b84a" stroke-width="1.8" stroke-linejoin="round"/>
<path d="M707 657.5H1095.5" stroke="#dd6470" stroke-width="1.6"/>
<text x="700.5" y="424.8" text-anchor="end" fill="#1f2c33" stroke="#1f2c33" stroke-width="0.08">20 vps</text>
<text x="700.5" y="448.4" text-anchor="end" fill="#1f2c33" stroke="#1f2c33" stroke-width="0.08">18 vps</text>
<text x="700.5" y="471.9" text-anchor="end" fill="#1f2c33" stroke="#1f2c33" stroke-width="0.08">16 vps</text>
<text x="700.5" y="495.5" text-anchor="end" fill="#1f2c33" stroke="#1f2c33" stroke-width="0.08">14 vps</text>
<text x="700.5" y="519.0" text-anchor="end" fill="#1f2c33" stroke="#1f2c33" stroke-width="0.08">12 vps</text>
<text x="700.5" y="542.6" text-anchor="end" fill="#1f2c33" stroke="#1f2c33" stroke-width="0.08">10 vps</text>
<text x="700.5" y="566.2" text-anchor="end" fill="#1f2c33" stroke="#1f2c33" stroke-width="0.08">8 vps</text>
<text x="700.5" y="589.7" text-anchor="end" fill="#1f2c33" stroke="#1f2c33" stroke-width="0.08">6 vps</text>
<text x="700.5" y="613.3" text-anchor="end" fill="#1f2c33" stroke="#1f2c33" stroke-width="0.08">4 vps</text>
<text x="700.5" y="636.8" text-anchor="end" fill="#1f2c33" stroke="#1f2c33" stroke-width="0.08">2 vps</text>
<text x="700.5" y="660.4" text-anchor="end" fill="#1f2c33" stroke="#1f2c33" stroke-width="0.08">0 vps</text>
<text x="745.3" y="674" text-anchor="middle" fill="#1f2c33" stroke="#1f2c33" stroke-width="0.08">2-15 23:53</text>
<text x="832.8" y="674" text-anchor="middle" fill="#1f2c33" stroke="#1f2c33" stroke-width="0.08">2-16 00:06</text>
<text x="920.3" y="674" text-anchor="middle" fill="#1f2c33" stroke="#1f2c33" stroke-width="0.08">2-16 00:20</text>
<text x="1007.9" y="674" text-anchor="middle" fill="#1f2c33" stroke="#1f2c33" stroke-width="0.08">2-16 00:33</text>
<text x="1085" y="674" text-anchor="middle" fill="#1f2c33" stroke="#1f2c33" stroke-width="0.08">2-16 00:46</text>
<path d="M1164 422.4H1574" stroke="#1f2c33" stroke-opacity="0.16" stroke-width="1" stroke-dasharray="2 1.5"/>
<path d="M1164 451.84999999999997H1574" stroke="#1f2c33" stroke-opacity="0.16" stroke-width="1" stroke-dasharray="2 1.5"/>
<path d="M1164 481.29999999999995H1574" stroke="#1f2c33" stroke-opacity="0.16" stroke-width="1" stroke-dasharray="2 1.5"/>
<path d="M1164 510.75H1574" stroke="#1f2c33" stroke-opacity="0.16" stroke-width="1" stroke-dasharray="2 1.5"/>
<path d="M1164 540.2H1574" stroke="#1f2c33" stroke-opacity="0.16" stroke-width="1" stroke-dasharray="2 1.5"/>
<path d="M1164 569.65H1574" stroke="#1f2c33" stroke-opacity="0.16" stroke-width="1" stroke-dasharray="2 1.5"/>
<path d="M1164 599.1H1574" stroke="#1f2c33" stroke-opacity="0.16" stroke-width="1" stroke-dasharray="2 1.5"/>
<path d="M1164 628.55H1574" stroke="#1f2c33" stroke-opacity="0.16" stroke-width="1" stroke-dasharray="2 1.5"/>
<path d="M1196.6 422.4V658" stroke="#1f2c33" stroke-opacity="0.16" stroke-width="1" stroke-dasharray="2 1.5"/>
<path d="M1284.8 422.4V658" stroke="#1f2c33" stroke-opacity="0.16" stroke-width="1" stroke-dasharray="2 1.5"/>
<path d="M1371.6 422.4V658" stroke="#1f2c33" stroke-opacity="0.16" stroke-width="1" stroke-dasharray="2 1.5"/>
<path d="M1459 422.4V658" stroke="#1f2c33" stroke-opacity="0.16" stroke-width="1" stroke-dasharray="2 1.5"/>
<path d="M1546.7 422.4V658" stroke="#1f2c33" stroke-opacity="0.16" stroke-width="1" stroke-dasharray="2 1.5"/>
<path d="M1162 417.4V658H1579" fill="none" stroke="#d9dee2" stroke-width="1.3"/>
<path d="M1162 413.4 l-3 4.5 h6 z" fill="#fff" stroke="#d3d9dd" stroke-width="1"/>
<path d="M1583 658 l-4.5 -3 v6 z" fill="#fff" stroke="#d3d9dd" stroke-width="1"/>
<polyline points="1166.6,451.7 1179.7,451.7 1193.5,449.7 1204.6,451.4 1228.2,451.7 1235.1,446.2 1242.4,451.7 1256.5,451.7 1261.7,446.4 1283.4,446.4 1289.3,451.7 1303.0,451.7 1310.3,446.4 1316.8,451.7 1324.0,447.1 1331.3,451.7 1337.2,452.5 1344.4,451.4 1350.3,452.5 1385.6,452.5 1392.5,451.2 1399.4,452.5 1406.2,451.2 1413.1,452.5 1440.0,452.5 1447.5,447.0 1454.4,452.5 1460.6,447.0 1467.4,452.5 1530.0,452.5 1536.9,447.0 1543.7,451.5 1550.6,452.5 1556.1,454.3 1563.0,455.2 1570.6,455.2" fill="none" stroke="#a8b520" stroke-width="1.8" stroke-linejoin="round"/>
<path d="M1163 657.5H1570" stroke="#6d8fae" stroke-width="1.6"/>
<text x="1156" y="424.8" text-anchor="end" fill="#1f2c33" stroke="#1f2c33" stroke-width="0.08">80 %</text>
<text x="1156" y="454.2" text-anchor="end" fill="#1f2c33" stroke="#1f2c33" stroke-width="0.08">70 %</text>
<text x="1156" y="483.7" text-anchor="end" fill="#1f2c33" stroke="#1f2c33" stroke-width="0.08">60 %</text>
<text x="1156" y="513.1" text-anchor="end" fill="#1f2c33" stroke="#1f2c33" stroke-width="0.08">50 %</text>
<text x="1156" y="542.6" text-anchor="end" fill="#1f2c33" stroke="#1f2c33" stroke-width="0.08">40 %</text>
<text x="1156" y="572.0" text-anchor="end" fill="#1f2c33" stroke="#1f2c33" stroke-width="0.08">30 %</text>
<text x="1156" y="601.5" text-anchor="end" fill="#1f2c33" stroke="#1f2c33" stroke-width="0.08">20 %</text>
<text x="1156" y="630.9" text-anchor="end" fill="#1f2c33" stroke="#1f2c33" stroke-width="0.08">10 %</text>
<text x="1156" y="660.4" text-anchor="end" fill="#1f2c33" stroke="#1f2c33" stroke-width="0.08">0 %</text>
<text x="1196.6" y="674" text-anchor="middle" fill="#1f2c33" stroke="#1f2c33" stroke-width="0.08">2-15 23:52</text>
<text x="1284.8" y="674" text-anchor="middle" fill="#1f2c33" stroke="#1f2c33" stroke-width="0.08">2-16 00:05</text>
<text x="1371.6" y="674" text-anchor="middle" fill="#1f2c33" stroke="#1f2c33" stroke-width="0.08">2-16 00:17</text>
<text x="1459" y="674" text-anchor="middle" fill="#1f2c33" stroke="#1f2c33" stroke-width="0.08">2-16 00:30</text>
<text x="1536" y="674" text-anchor="middle" fill="#1f2c33" stroke="#1f2c33" stroke-width="0.08">2-16 00:43</text>
</svg>
<div id="ft"><div style="color:#768d99">MIRACLE ZBX 6.0.1-1.</div><div style="color:#1f7db3">MIRACLE ZBX is a registered trade mark in Japan and derived from Zabbix 6.0.1 under GPL v2 license.</div><div style="color:#1f7db3">Zabbix 6.0.1 Copyright 2001-2022 by Zabbix SIA</div></div>
</body></html>
